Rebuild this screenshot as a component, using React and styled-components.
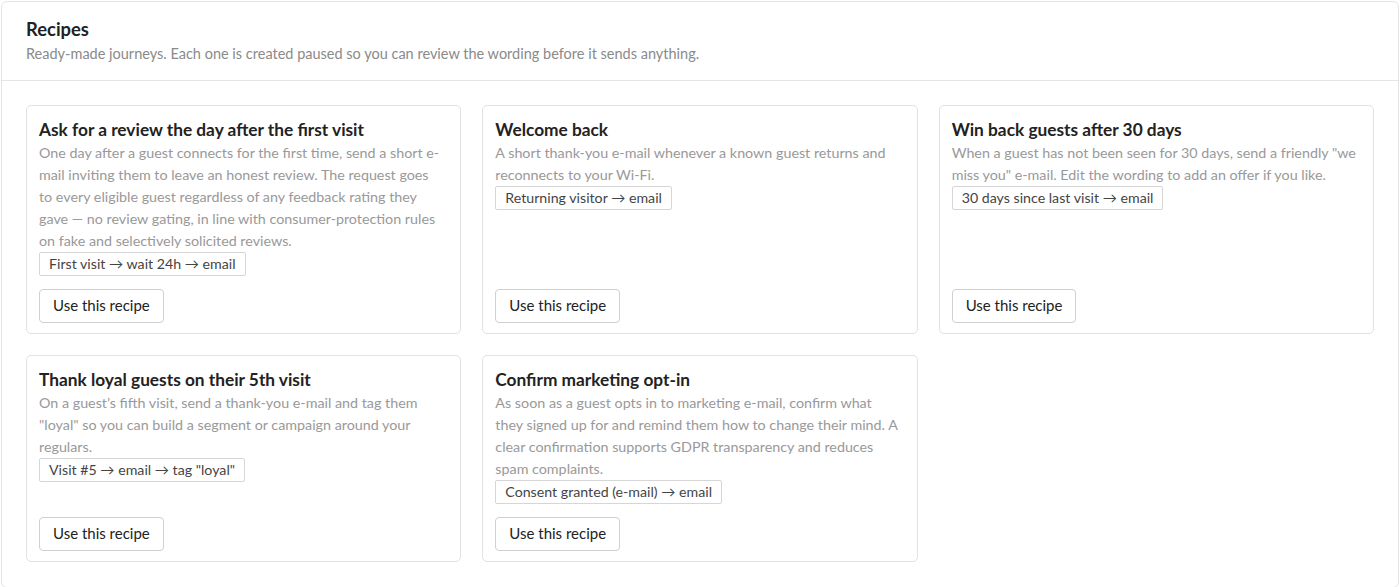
import React from 'react';
import styled, { createGlobalStyle } from 'styled-components';

const GlobalStyle = createGlobalStyle`
  html, body {
    margin: 0;
    padding: 0;
    background: #fff;
  }
  body {
    padding: 1px;
    font-family: Lato, "Open Sans", "Liberation Sans", sans-serif;
    color: #222;
  }
  * {
    box-sizing: border-box;
  }
`;

// Recipe data, as shown on the page
const recipes = [
  {
    title: 'Ask for a review the day after the first visit',
    text: 'One day after a guest connects for the first time, send a short e-mail inviting them to leave an honest review. The request goes to every eligible guest regardless of any feedback rating they gave \u2014 no review gating, in line with consumer-protection rules on fake and selectively solicited reviews.',
    flow: 'First visit \u2192 wait 24h \u2192 email'
  },
  {
    title: 'Welcome back',
    text: 'A short thank-you e-mail whenever a known guest returns and reconnects to your Wi-Fi.',
    flow: 'Returning visitor \u2192 email'
  },
  {
    title: 'Win back guests after 30 days',
    text: 'When a guest has not been seen for 30 days, send a friendly "we miss you" e-mail. Edit the wording to add an offer if you like.',
    flow: '30 days since last visit \u2192 email'
  },
  {
    title: 'Thank loyal guests on their 5th visit',
    text: 'On a guest\u2019s fifth visit, send a thank-you e-mail and tag them "loyal" so you can build a segment or campaign around your regulars.',
    flow: 'Visit #5 \u2192 email \u2192 tag "loyal"'
  },
  {
    title: 'Confirm marketing opt-in',
    text: 'As soon as a guest opts in to marketing e-mail, confirm what they signed up for and remind them how to change their mind. A clear confirmation supports GDPR transparency and reduces spam complaints.',
    flow: 'Consent granted (e-mail) \u2192 email'
  }
];

const App = () => {
  return (
    <>
      <GlobalStyle />
      <Panel>
        <PanelHeader>
          <PanelTitle>Recipes</PanelTitle>
          <PanelSubtitle>
            Ready-made journeys. Each one is created paused so you can review the wording before it sends anything.
          </PanelSubtitle>
        </PanelHeader>
        <PanelBody>
          <RecipeGrid>
            {recipes.map((r) => (
              <RecipeCard key={r.title}>
                <RecipeTitle>{r.title}</RecipeTitle>
                <RecipeText>{r.text}</RecipeText>
                <FlowTag>{r.flow}</FlowTag>
                <UseButton type="button">Use this recipe</UseButton>
              </RecipeCard>
            ))}
          </RecipeGrid>
        </PanelBody>
      </Panel>
    </>
  );
};

const Panel = styled.section`
  border: 1px solid #e4e4e4;
  border-radius: 6px;
  background: #fff;
`;

const PanelHeader = styled.header`
  padding: 15px 24px 16px;
  border-bottom: 1px solid #e4e4e4;
`;

const PanelTitle = styled.h2`
  margin: 0;
  font-size: 18.4px;
  line-height: 24px;
  font-weight: 700;
  color: #222;
`;

const PanelSubtitle = styled.p`
  margin: 3px 0 0;
  font-size: 14.5px;
  line-height: 20px;
  color: #8a8a8a;
`;

const PanelBody = styled.div`
  padding: 24px 24px 25px;
`;

const RecipeGrid = styled.div`
  display: grid;
  grid-template-columns: repeat(3, 1fr);
  gap: 21px 21px;
`;

const RecipeCard = styled.div`
  display: flex;
  flex-direction: column;
  align-items: flex-start;
  border: 1px solid #e2e2e2;
  border-radius: 5px;
  padding: 12px 16px 10px 12px;
`;

const RecipeTitle = styled.h3`
  margin: 0;
  font-size: 17.3px;
  line-height: 24px;
  font-weight: 700;
  color: #222;
`;

const RecipeText = styled.p`
  margin: 0;
  font-size: 14.3px;
  line-height: 22px;
  color: #999;
`;

const FlowTag = styled.span`
  display: inline-block;
  margin: 0 0 13px;
  padding: 1px 9px;
  border: 1px solid #d6d6d6;
  border-radius: 2px;
  font-size: 14.2px;
  line-height: 20px;
  color: #444;
`;

const UseButton = styled.button`
  margin-top: auto;
  padding: 0 13px 2px;
  height: 34px;
  border: 1px solid #d0d0d0;
  border-radius: 4px;
  background: #fff;
  font-family: inherit;
  font-size: 15px;
  color: #222;
  cursor: pointer;
`;

export default App;
